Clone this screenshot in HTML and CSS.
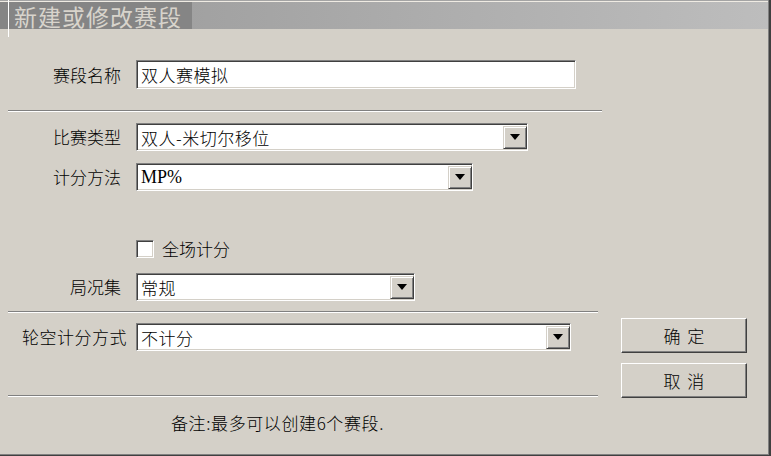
FILE: index.html
```html
<!DOCTYPE html>
<html lang="zh-CN">
<head>
    <meta charset="UTF-8">
    <title>新建或修改赛段</title>
    <link rel="stylesheet" href="styles.css">
</head>
<body>
    <div class="dialog">
        <div class="caption">
            <span class="caption-text">新建或修改赛段</span>
        </div>

        <div class="content">
            <div class="row row-name">
                <span class="label">赛段名称</span>
                <div class="field input w-name">双人赛模拟</div>
            </div>

            <div class="sep sep-top"></div>

            <div class="row row-type">
                <span class="label">比赛类型</span>
                <div class="field combo w-type">
                    <span class="combo-text">双人-米切尔移位</span>
                    <span class="drop"></span>
                </div>
            </div>

            <div class="row row-score">
                <span class="label">计分方法</span>
                <div class="field combo w-score">
                    <span class="combo-text serif">MP%</span>
                    <span class="drop"></span>
                </div>
            </div>

            <div class="check-row">
                <span class="checkbox"></span>
                <span class="check-label">全场计分</span>
            </div>

            <div class="row row-deal">
                <span class="label">局况集</span>
                <div class="field combo w-deal">
                    <span class="combo-text">常规</span>
                    <span class="drop"></span>
                </div>
            </div>

            <div class="sep sep-mid"></div>

            <div class="lower">
                <div class="lower-left">
                    <div class="row row-bye">
                        <span class="label label-wide">轮空计分方式</span>
                        <div class="field combo w-bye">
                            <span class="combo-text">不计分</span>
                            <span class="drop"></span>
                        </div>
                    </div>
                    <div class="sep sep-low"></div>
                    <div class="note">备注:最多可以创建6个赛段.</div>
                </div>
                <div class="lower-right">
                    <button class="btn" type="button">确 定</button>
                    <button class="btn" type="button">取 消</button>
                </div>
            </div>
        </div>
    </div>
</body>
</html>
```

FILE: styles.css
```css
html, body {
    margin: 0;
    padding: 0;
}

body {
    width: 771px;
    height: 456px;
    overflow: hidden;
    background: #d4d0c8;
    font-family: "Noto Sans CJK SC", "Liberation Sans", sans-serif;
    font-size: 17px;
    font-weight: 300;
    color: #000;
}

.dialog {
    position: relative;
    width: 771px;
    height: 456px;
    box-sizing: border-box;
    background: #d4d0c8;
    box-shadow: inset -2px -1px #404040, inset -3px -2px #808080;
}

/* thin white edge of the group panel */
.dialog::before {
    content: "";
    position: absolute;
    left: 8px;
    top: 0;
    width: 1px;
    height: 37px;
    background: #fff;
}

/* title bar */
.caption {
    height: 29px;
    margin-right: 3px;
    background:
        linear-gradient(to bottom, #a4a4a4 0 1px, #efebe3 1px 2px, transparent 2px),
        linear-gradient(to right, #989898, #bdbdbd);
}

.caption-text {
    display: inline-block;
    margin-top: 2px;
    height: 27px;
    line-height: 28px;
    padding: 0 10px 0 14px;
    background: #858585;
    color: #d8d4cc;
    font-size: 23px;
    letter-spacing: 1px;
    font-weight: 400;
}

.content {
    padding-left: 8px;
}

.row {
    display: flex;
    align-items: center;
    gap: 15px;
}

.label {
    flex-shrink: 0;
    width: 113px;
    text-align: right;
    white-space: nowrap;
    line-height: 20px;
}

.label-wide {
    width: 119px;
    margin-right: -6px;
    letter-spacing: 0.5px;
}

/* sunken edit / combo box */
.field {
    box-sizing: border-box;
    height: 28px;
    display: flex;
    align-items: center;
    padding-left: 4px;
    background: #fff;
    border: 1px solid;
    border-color: #808080 #fff #fff #808080;
    box-shadow: inset 1px 1px #404040, inset -1px -1px #d4d0c8;
    white-space: nowrap;
    letter-spacing: 0.5px;
}

.input {
    height: 29px;
}

.combo-text {
    flex: 1;
}

.serif {
    font-family: "Liberation Serif", serif;
    font-size: 18px;
    font-weight: 400;
    letter-spacing: 0;
}

.drop {
    box-sizing: border-box;
    width: 24px;
    height: 23px;
    display: flex;
    align-items: center;
    justify-content: center;
    background: #d4d0c8;
    border: 1px solid;
    border-color: #d4d0c8 #404040 #404040 #d4d0c8;
    box-shadow: inset 1px 1px #fff, inset -1px -1px #808080;
}

.drop::after {
    content: "";
    border-left: 5px solid transparent;
    border-right: 5px solid transparent;
    border-top: 6px solid #000;
}

.w-name { width: 440px; }
.w-type { width: 392px; }
.w-score { width: 337px; }
.w-deal { width: 279px; }
.w-bye { width: 435px; }

.row-name { margin-top: 31px; }
.row-type { margin-top: 11px; }
.row-score { margin-top: 12px; }
.row-deal { margin-top: 15px; }
.row-bye { margin-top: 10px; }

/* etched separators */
.sep {
    height: 0;
    border-top: 1px solid #808080;
    border-bottom: 1px solid #fff;
}

.sep-top {
    width: 594px;
    margin-top: 21px;
}

.sep-mid {
    width: 590px;
    margin-top: 10px;
}

.sep-low {
    width: 590px;
    margin-top: 44px;
}

.check-row {
    display: flex;
    align-items: center;
    gap: 8px;
    height: 18px;
    margin-top: 49px;
    margin-left: 128px;
}

.checkbox {
    box-sizing: border-box;
    width: 18px;
    height: 18px;
    background: #fff;
    border: 1px solid;
    border-color: #808080 #fff #fff #808080;
    box-shadow: inset 1px 1px #404040, inset -1px -1px #d4d0c8;
}

.check-label {
    line-height: 20px;
}

.lower {
    display: flex;
}

.lower-left {
    width: 590px;
}

.lower-right {
    display: flex;
    flex-direction: column;
    gap: 10px;
    margin-left: 23px;
    padding-top: 5px;
}

.note {
    margin-top: 16px;
    padding-left: 163px;
    line-height: 20px;
    white-space: nowrap;
    letter-spacing: 0.6px;
}

.btn {
    box-sizing: border-box;
    width: 126px;
    height: 35px;
    padding: 0;
    background: #d4d0c8;
    border: 1px solid;
    border-color: #fff #404040 #404040 #fff;
    box-shadow: inset -1px -1px #808080;
    font-family: inherit;
    font-size: 17px;
    font-weight: 300;
    color: #000;
    word-spacing: 3px;
}
```
